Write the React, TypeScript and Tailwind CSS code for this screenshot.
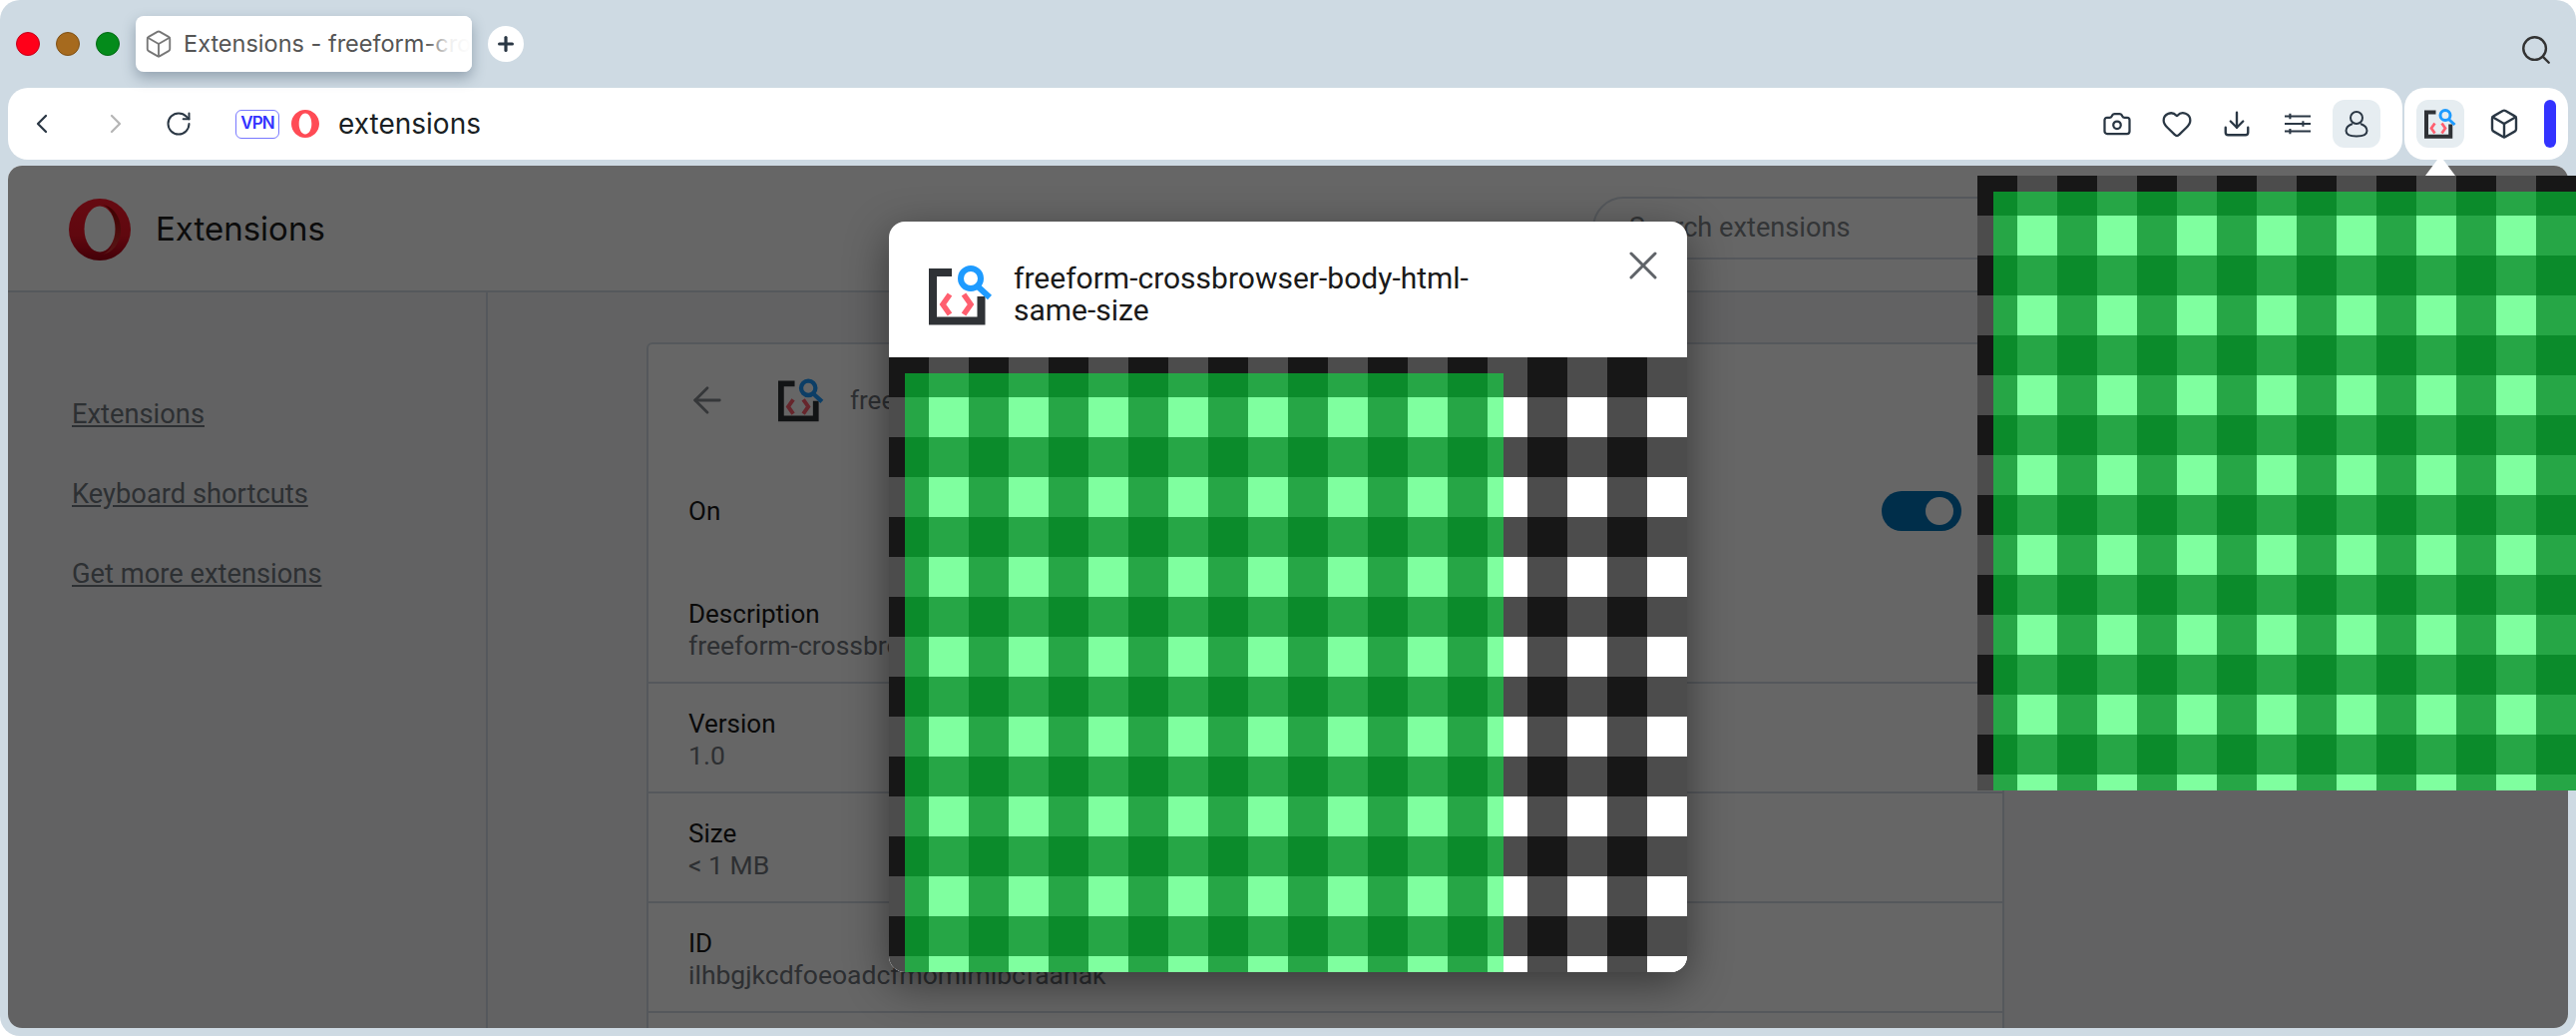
import { ArrowLeft, Box, Camera, ChevronLeft, ChevronRight, Download, Heart, Plus, RotateCw, Search, X } from "lucide-react";

const checker =
  "bg-white bg-[repeating-linear-gradient(90deg,rgba(0,0,0,0.7)_0_40px,transparent_40px_80px),repeating-linear-gradient(180deg,rgba(0,0,0,0.7)_0_40px,transparent_40px_80px)]";

function ExtIcon({ className }: { className: string }) {
  return (
    <svg viewBox="0 0 64 64" className={`blur-[0.5px] ${className}`} fill="none">
      <path d="M23 9H4V57.500H52.500V33" stroke="#2f3236" strokeWidth="8" />
      <circle cx="42" cy="15" r="10" stroke="#1e9bff" strokeWidth="6" />
      <path d="M49 23L61 34" stroke="#1e9bff" strokeWidth="6" />
      <path d="M21 31L14 41L21 51M35 31L42 41L35 51" stroke="#ff5f6f" strokeWidth="5.500" />
    </svg>
  );
}

function OperaLogo({ className, flat }: { className: string; flat?: boolean }) {
  return (
    <svg viewBox="0 0 62 62" className={className}>
      <defs>
        <linearGradient id="operaRed" x1="0" y1="0" x2="0" y2="1">
          <stop offset="0" stopColor="#ff1b2d" />
          <stop offset="0.6" stopColor="#f01426" />
          <stop offset="1" stopColor="#a70014" />
        </linearGradient>
        <linearGradient id="operaInner" x1="0" y1="0" x2="0" y2="1">
          <stop offset="0" stopColor="#9c0000" />
          <stop offset="1" stopColor="#e03a3a" />
        </linearGradient>
      </defs>
      {flat ? (
        <path
          fillRule="evenodd"
          fill="#ff4b55"
          d="M31 0C48 0 62 14 62 31S48 62 31 62 0 48 0 31 14 0 31 0ZM31 8C23 8 17 18 17 31S23 54 31 54 45 44 45 31 39 8 31 8Z"
        />
      ) : (
        <>
          <circle cx="31" cy="31" r="31" fill="url(#operaRed)" />
          <path d="M31 6C44 6 52 18 52 31S44 56 31 56C42 56 46 42 46 31S42 6 31 6Z" fill="url(#operaInner)" />
          <ellipse cx="31" cy="30.500" rx="15.500" ry="23" fill="#fff" />
        </>
      )}
    </svg>
  );
}

function Slides() {
  return (
    <svg viewBox="0 0 24 24" className="w-[26px] h-[26px]" fill="none" stroke="#2a3744" strokeWidth="1.9">
      <path d="M0 5H24M0 12H24M0 19H24" />
      <path d="M5 2.500V7.500M17 9.500V14.500M5 16.500V21.500" />
    </svg>
  );
}

function Person() {
  return (
    <svg viewBox="0 0 24 28" className="w-[24px] h-[28px]" fill="none" stroke="#2a3744" strokeWidth="2">
      <circle cx="12" cy="8" r="6" />
      <path d="M8 14C4 15.500 1.500 18 1.500 21C1.500 25 6 26.500 12 26.500S22.500 25 22.500 21C22.500 18 20 15.500 16 14" />
    </svg>
  );
}

function Checker() {
  return (
    <div className={`w-[800px] h-[616px] p-4 overflow-hidden ${checker}`}>
      <div className="w-[600px] h-[600px] bg-[rgba(0,255,63,0.5)]" />
    </div>
  );
}

function Row({ label, value }: { label: string; value: string }) {
  return (
    <div className="h-[110px] px-10 pt-1 border-b-2 border-[#d5dde5] flex flex-col justify-center leading-[31px]">
      <div className="text-[26px] text-[#1a1a1a]">{label}</div>
      <div className="text-[26.500px] text-[#72777d] whitespace-nowrap">{value}</div>
    </div>
  );
}

export default function App() {
  return (
    <div className="relative w-[2582px] h-[1038px] overflow-hidden bg-white font-[Roboto]">
      <div className="w-full h-full rounded-[20px] bg-[#cedae3] px-2 pb-2 flex flex-col">
        {/* tab strip */}
        <div className="h-[88px] shrink-0 flex items-start">
          <div className="flex items-center gap-4 h-[88px] pl-2 pr-4">
            <span className="w-6 h-6 rounded-full bg-[#ff0019] border border-[#c4001a]" />
            <span className="w-6 h-6 rounded-full bg-[#a66a1e] border border-[#7f5015]" />
            <span className="w-6 h-6 rounded-full bg-[#048b1b] border border-[#036a14]" />
          </div>
          <div className="relative mt-4 w-[337px] h-14 bg-white rounded-lg shadow-[0_6px_14px_rgba(60,80,100,0.4)] flex items-center pl-2 gap-2.5 overflow-hidden">
            <Box className="w-[30px] h-[30px] shrink-0 text-[#777]" strokeWidth={1.5} />
            <span className="font-[Inter] text-[23.500px] text-[#555] whitespace-nowrap">Extensions - freeform-crossbrowser</span>
            <div className="absolute right-0 top-0 h-full w-[46px] bg-gradient-to-r from-transparent via-white/90 to-white" />
          </div>
          <div className="ml-4 mt-[26px] w-9 h-9 rounded-full bg-white flex items-center justify-center">
            <Plus className="w-[22px] h-[22px] text-[#2a3744]" strokeWidth={3.5} />
          </div>
          <Search className="ml-auto mt-[33px] mr-[15px] w-[34px] h-[34px] text-[#333]" strokeWidth={1.7} />
        </div>

        {/* address bar + extensions */}
        <div className="h-[72px] shrink-0 flex gap-0.5">
          <div className="flex-1 bg-white rounded-[20px] flex items-center text-[#2a3744]">
            <ChevronLeft className="ml-[18px] w-8 h-8" strokeWidth={1.7} />
            <ChevronRight className="ml-[42px] w-8 h-8 text-[#b5b5b5]" strokeWidth={1.7} />
            <RotateCw className="ml-[33px] w-7 h-7" strokeWidth={1.7} />
            <span className="ml-[43px] w-11 h-[29px] rounded-md border border-[#7878ff] flex items-center justify-center font-[Inter] text-[17px] tracking-tighter font-semibold text-[#3333ff]">
              VPN
            </span>
            <OperaLogo flat className="ml-3 w-[28px] h-[28px]" />
            <span className="ml-[19px] font-[Inter] text-[28px] text-[#1a1f24]">extensions</span>
            <div className="ml-auto flex items-center">
              <Camera className="w-[30px] h-[30px]" strokeWidth={1.8} />
              <Heart className="ml-[29px] w-[32px] h-[32px]" strokeWidth={1.7} />
              <Download className="ml-[29px] w-[30px] h-[30px]" strokeWidth={1.9} />
              <span className="ml-[33px]">
                <Slides />
              </span>
              <div className="ml-[22px] mr-[22px] w-12 h-12 rounded-xl bg-[#e6edf1] flex items-center justify-center">
                <Person />
              </div>
            </div>
          </div>
          <div className="w-[164px] bg-white rounded-[20px] flex items-center pl-3 ">
            <div className="w-12 h-12 rounded-xl bg-[#e6edf1] flex items-center justify-center">
              <ExtIcon className="w-8 h-8" />
            </div>
            <Box className="ml-[24px] w-[32px] h-[32px] text-[#2a3744]" strokeWidth={1.8} />
            <span className="ml-6 w-3 h-12 rounded-full bg-[#3333ff]" />
          </div>
        </div>

        {/* extensions page, dimmed by the dialog */}
        <div className="relative mt-1.5 flex-1 rounded-[14px] overflow-hidden bg-[#f5f6f8] flex flex-col">
          <div className="h-[127px] shrink-0 bg-white border-b-2 border-[#d5dde5] flex items-center pl-[61px]">
            <OperaLogo className="mt-0.5 w-[62px] h-[62px]" />
            <span className="mt-0.5 ml-[25px] font-[Inter] text-[33px] text-[#1f1f1f]">Extensions</span>
            <div className="ml-[1270px] w-[800px] h-[63px] shrink-0 rounded-full border-2 border-[#d5dde5] flex items-center pl-[35px] text-[27.200px] text-[#80858a]">
              Search extensions
            </div>
          </div>
          <div className="flex-1 flex min-h-0">
            <nav className="w-[481px] shrink-0 border-r-2 border-[#d5dde5] pl-16 pt-[106px] flex flex-col gap-[48px] text-[27.300px] leading-8 text-[#72787f] underline">
              <span>Extensions</span>
              <span>Keyboard shortcuts</span>
              <span>Get more extensions</span>
            </nav>
            <div className="pl-[159px] pt-[50px] flex-1">
              <div className="w-[1361px] h-[700px] bg-white border-2 border-[#d5dde5] rounded-md">
                <div className="h-[112px] px-10 flex items-center">
                  <ArrowLeft className="-ml-0.5 w-[42px] h-[42px] text-[#84898f]" strokeWidth={1.6} />
                  <ExtIcon className="ml-[50px] w-[46px] h-[46px]" />
                  <span className="ml-[26px] text-[26px] text-[#72777d]">freeform-crossbrowser-body-html-same-size</span>
                </div>
                <div className="h-[118px] pb-2 px-10 flex items-center justify-between text-[26px] text-[#1a1a1a]">
                  <span>On</span>
                  <div className="w-20 h-10 rounded-full bg-[#0073ba] flex items-center justify-end pr-2 mr-px">
                    <span className="w-7 h-7 rounded-full bg-white" />
                  </div>
                </div>
                <Row label="Description" value="freeform-crossbrowser-body-html-same-size" />
                <Row label="Version" value="1.0" />
                <Row label="Size" value="< 1 MB" />
                <Row label="ID" value="ilhbgjkcdfoeoadcfmomimibcfaanak" />
              </div>
            </div>
          </div>
          <div className="absolute inset-0 bg-black/60" />
        </div>
      </div>

      {/* popup under the extension button */}
      <div className="absolute left-[2431px] top-[156px] w-0 h-0 border-x-[15px] border-b-[20px] border-x-transparent border-b-white" />
      <div className="absolute left-[1982px] top-[176px] w-[600px] h-[616px] overflow-hidden">
        <Checker />
      </div>

      {/* dialog */}
      <div className="absolute left-[891px] top-[222px] w-[800px] rounded-2xl overflow-hidden bg-white shadow-[0_12px_44px_rgba(0,0,0,0.45)]">
        <div className="relative h-[136px] flex items-center pl-10 pt-3">
          <ExtIcon className="w-16 h-16 shrink-0" />
          <div className="ml-[21px] -mt-[3px] w-[480px] text-[30px] leading-8 text-[#1a1a1a]">freeform-crossbrowser-body-html-same-size</div>
          <X className="absolute right-[20px] top-[20px] w-12 h-12 text-[#5f6368]" strokeWidth={1.5} />
        </div>
        <Checker />
      </div>
    </div>
  );
}
